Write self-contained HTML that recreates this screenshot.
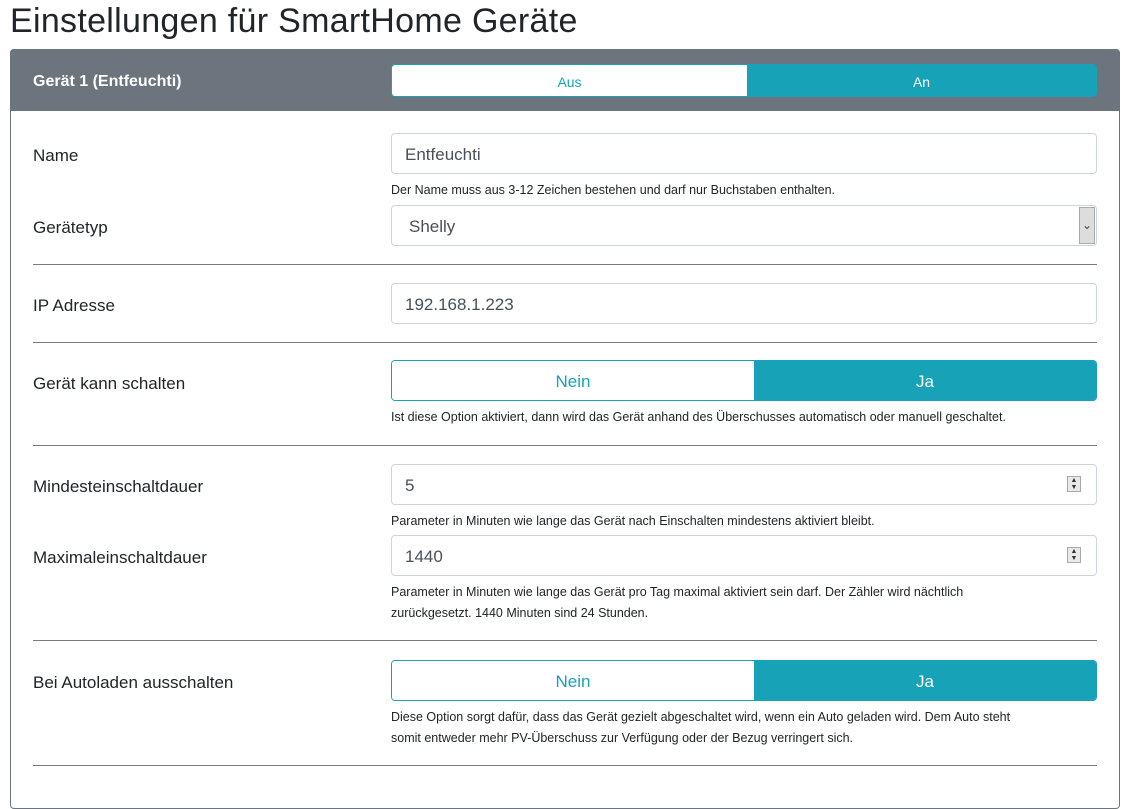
<!DOCTYPE html>
<html><head><meta charset="utf-8"><style>
*{box-sizing:border-box;margin:0;padding:0}
body{width:1128px;height:780px;overflow:hidden;background:#fff;font-family:"Liberation Sans","DejaVu Sans",sans-serif;color:#212529;position:relative}
.a{position:absolute}
h1{position:absolute;left:10px;top:2px;font-size:34px;font-weight:400;color:#212529;letter-spacing:0.3px}
.card{position:absolute;left:10px;top:49px;width:1110px;height:760px;border:1px solid #6c757d;border-radius:4px}
.hdr{position:absolute;left:10px;top:49px;width:1110px;height:62px;background:#6c757d;border-radius:4px 4px 0 0}
.lbl{position:absolute;left:33px;font-size:17px;color:#212529}
.inp{position:absolute;left:391px;width:706px;height:41px;border:1px solid #ced4da;border-radius:4px;font-size:17px;color:#495057;padding:11px 13px 0}
.help{position:absolute;left:391px;font-size:12.5px;color:#212529;line-height:21px;width:650px}
.hr{position:absolute;left:33px;width:1064px;height:1px;background:#7a7a7a}
.tg{position:absolute;left:391px;width:706px;height:41px;border:1px solid #17a2b8;border-radius:4px;display:flex;overflow:hidden;font-size:17px}
.tg div{display:flex;align-items:center;justify-content:center;padding-top:3px}
.off{width:362px;color:#17a2b8;background:#fff}
.on{flex:1;background:#17a2b8;color:#fff}
.spin{position:absolute;left:1067px;width:14px;height:16px;border:1px solid #aaa;background:#e8e8e8;font-size:7px;line-height:7px;text-align:center;color:#333}
</style></head><body>
<h1>Einstellungen für SmartHome Geräte</h1>
<div class="card"></div>
<div class="hdr"></div>
<div class="a" style="left:33px;top:73px;font-size:16px;font-weight:bold;color:#fff">Gerät 1 (Entfeuchti)</div>
<div class="tg" style="top:64px;height:33px;font-size:14px;border-color:#17a2b8"><div class="off" style="width:355px">Aus</div><div class="on">An</div></div>

<div class="lbl" style="top:146px">Name</div>
<div class="inp" style="top:133px">Entfeuchti</div>
<div class="help" style="top:180px">Der Name muss aus 3-12 Zeichen bestehen und darf nur Buchstaben enthalten.</div>

<div class="lbl" style="top:218px">Gerätetyp</div>
<div class="inp" style="top:205px;padding-left:17px">Shelly</div>
<div class="a" style="left:1079px;top:207px;width:16px;height:37px;background:#ddd;border:1px solid #aaa;font-size:12px;text-align:center;line-height:35px;color:#444">⌄</div>
<div class="hr" style="top:264px"></div>

<div class="lbl" style="top:296px">IP Adresse</div>
<div class="inp" style="top:283px">192.168.1.223</div>
<div class="hr" style="top:342px"></div>

<div class="lbl" style="top:374px">Gerät kann schalten</div>
<div class="tg" style="top:360px"><div class="off">Nein</div><div class="on">Ja</div></div>
<div class="help" style="top:407px;width:700px">Ist diese Option aktiviert, dann wird das Gerät anhand des Überschusses automatisch oder manuell geschaltet.</div>
<div class="hr" style="top:445px"></div>

<div class="lbl" style="top:477px">Mindesteinschaltdauer</div>
<div class="inp" style="top:464px">5</div>
<div class="spin" style="top:476px">▲<br>▼</div>
<div class="help" style="top:511px">Parameter in Minuten wie lange das Gerät nach Einschalten mindestens aktiviert bleibt.</div>

<div class="lbl" style="top:548px">Maximaleinschaltdauer</div>
<div class="inp" style="top:535px">1440</div>
<div class="spin" style="top:547px">▲<br>▼</div>
<div class="help" style="top:582px;width:640px">Parameter in Minuten wie lange das Gerät pro Tag maximal aktiviert sein darf. Der Zähler wird nächtlich zurückgesetzt. 1440 Minuten sind 24 Stunden.</div>
<div class="hr" style="top:640px"></div>

<div class="lbl" style="top:673px">Bei Autoladen ausschalten</div>
<div class="tg" style="top:660px"><div class="off">Nein</div><div class="on">Ja</div></div>
<div class="help" style="top:707px;width:640px">Diese Option sorgt dafür, dass das Gerät gezielt abgeschaltet wird, wenn ein Auto geladen wird. Dem Auto steht somit entweder mehr PV-Überschuss zur Verfügung oder der Bezug verringert sich.</div>
<div class="hr" style="top:765px"></div>
</body></html>
